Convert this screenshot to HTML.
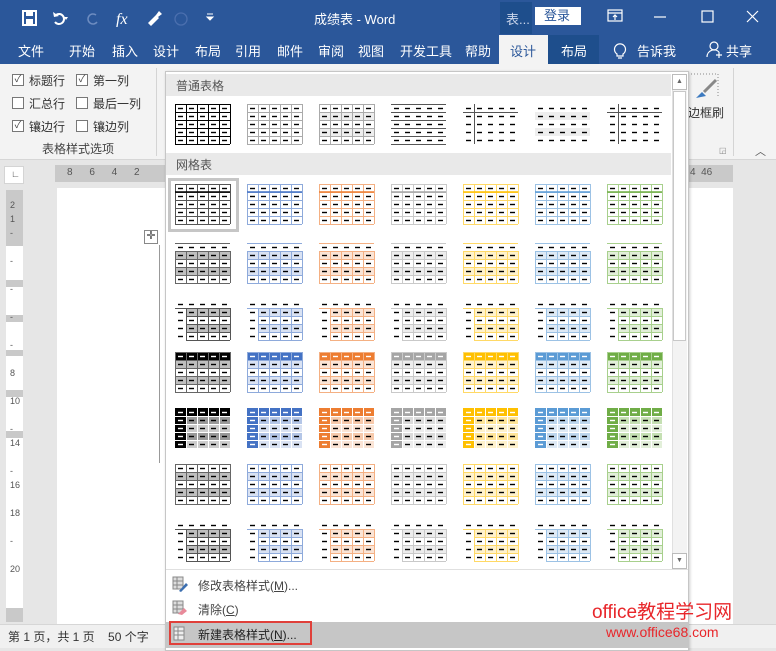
<!DOCTYPE html>
<html><head><meta charset="utf-8"><style>
*{margin:0;padding:0;box-sizing:border-box}
body{width:776px;height:648px;overflow:hidden;position:relative;background:#e6e6e6;font-family:"Liberation Sans","Noto Sans CJK SC",sans-serif;font-size:12px;color:#333}
.a{position:absolute;white-space:nowrap}
.w{color:#fff}
</style></head><body>
<!-- title bar -->
<div class="a" style="left:0;top:0;width:776px;height:64px;background:#2b579a"></div>
<svg class="a" style="left:20px;top:9px" width="200" height="18"><rect x="3" y="2" width="13" height="14" fill="none" stroke="#fff" stroke-width="2"/><rect x="6" y="2" width="7" height="5" fill="#fff"/><rect x="6" y="10" width="7" height="6" fill="#fff"/>
<path d="M36 6 a5 5 0 1 1 -1 7" fill="none" stroke="#fff" stroke-width="2"/><path d="M33 3 l1 5 5-1z" fill="#fff"/><path d="M44 8 l4 0 -2 3z" fill="#fff"/>
<path d="M76 6 a5 5 0 1 0 1 7" fill="none" stroke="#6d8cc0" stroke-width="1.5"/>
<text x="96" y="15" fill="#fff" font-family="Liberation Serif" font-style="italic" font-size="16">fx</text>
<path d="M128 14 l8-8 3 3 -8 8z M136 6 l3-4 3 3 -4 3z" fill="#fff"/>
<circle cx="161" cy="10" r="6" fill="none" stroke="#4b6fae" stroke-width="1.3"/>
<path d="M187 8h6l-3 3z M187 5h6" stroke="#fff" fill="#fff"/></svg>
<div class="a w" style="left:314px;top:9px;font-size:13px">成绩表 - Word</div>
<div class="a" style="left:500px;top:2px;width:32px;height:32px;background:#1e4e8c;color:#c9d5ea;padding:7px 0 0 6px;font-size:13px">表...</div>
<div class="a" style="left:535px;top:7px;width:46px;height:18px;background:#fff;color:#2b579a;font-size:13px;padding:0 0 0 9px;line-height:18px">登录</div>
<svg class="a" style="left:606px;top:8px" width="160" height="20"><rect x="2" y="2" width="14" height="11" fill="none" stroke="#fff" stroke-width="1.2"/><path d="M2 5h14M9 12V7M7 9l2-2 2 2" stroke="#fff" fill="none" stroke-width="1.2"/><path d="M48 9h12" stroke="#fff" stroke-width="1.2"/><rect x="96" y="3" width="11" height="11" fill="none" stroke="#fff" stroke-width="1.2"/><path d="M141 3l11 11M152 3l-11 11" stroke="#fff" stroke-width="1.2"/></svg>
<div class="a w" style="left:18px;top:41px;font-size:13px">文件</div>
<div class="a w" style="left:69px;top:41px;font-size:13px">开始</div>
<div class="a w" style="left:112px;top:41px;font-size:13px">插入</div>
<div class="a w" style="left:153px;top:41px;font-size:13px">设计</div>
<div class="a w" style="left:195px;top:41px;font-size:13px">布局</div>
<div class="a w" style="left:235px;top:41px;font-size:13px">引用</div>
<div class="a w" style="left:277px;top:41px;font-size:13px">邮件</div>
<div class="a w" style="left:318px;top:41px;font-size:13px">审阅</div>
<div class="a w" style="left:358px;top:41px;font-size:13px">视图</div>
<div class="a w" style="left:400px;top:41px;font-size:13px">开发工具</div>
<div class="a w" style="left:465px;top:41px;font-size:13px">帮助</div>
<div class="a" style="left:499px;top:35px;width:49px;height:30px;background:#f3f3f3;color:#2b579a;font-size:13px;padding:6px 0 0 11px">设计</div>
<div class="a" style="left:548px;top:35px;width:51px;height:29px;background:#1e4e8c;color:#fff;font-size:13px;padding:6px 0 0 13px">布局</div>
<svg class="a" style="left:610px;top:40px" width="20" height="20"><path d="M7 14 a5.5 5.5 0 1 1 6 0 v2h-6z M8 18h4" fill="none" stroke="#fff" stroke-width="1.2"/></svg>
<div class="a w" style="left:637px;top:41px;font-size:13px">告诉我</div>
<svg class="a" style="left:706px;top:40px" width="20" height="20"><circle cx="8" cy="6" r="4" fill="none" stroke="#fff" stroke-width="1.2"/><path d="M1 17 a7 7 0 0 1 12-5 M13 12v6M10 15h6" fill="none" stroke="#fff" stroke-width="1.2"/></svg>
<div class="a w" style="left:726px;top:41px;font-size:13px">共享</div>
<!-- ribbon -->
<div class="a" style="left:0;top:64px;width:776px;height:96px;background:#f3f3f3;border-bottom:1px solid #d6d6d6"></div>
<div class="a" style="left:156px;top:68px;width:1px;height:88px;background:#d4d4d4"></div>
<div id="cb"></div>
<div class="a" style="left:42px;top:140px;font-size:12px;color:#444">表格样式选项</div>
<div class="a" style="left:688px;top:104px;font-size:12px;color:#333">边框刷</div>
<svg class="a" style="left:688px;top:72px" width="40" height="30"><path d="M0 2h30v24" fill="none" stroke="#888" stroke-dasharray="1 2"/><path d="M8 26 l6-6 4 4z" fill="#3c7ac0"/><path d="M16 20 l12-12" stroke="#888" stroke-width="3"/></svg>
<div class="a" style="left:733px;top:68px;width:1px;height:88px;background:#d4d4d4"></div>
<div class="a" style="left:719px;top:146px;font-size:8px;color:#888">◲</div>
<div class="a" style="left:755px;top:143px;font-size:11px;color:#555">︿</div>
<!-- ruler & doc -->
<div class="a" style="left:4px;top:166px;width:20px;height:18px;background:#fff;border:1px solid #d4d4d4;font-size:9px;padding:2px 0 0 6px;color:#444">∟</div>
<div class="a" style="left:55px;top:165px;width:110px;height:17px;background:#c9c9c9;font-size:10px;color:#555;word-spacing:14px;padding:2px 0 0 12px">8 6 4 2</div>
<div class="a" style="left:688px;top:165px;width:45px;height:17px;background:#c9c9c9;font-size:10px;color:#555;padding:2px 0 0 2px">4&nbsp;&nbsp;46</div>
<div class="a" style="left:57px;top:188px;width:676px;height:436px;background:#fff"></div>
<div class="a" style="left:6px;top:190px;width:17px;height:432px;background:#c9c9c9"></div>
<div class="a" style="left:6px;top:246px;width:17px;height:34px;background:#fff"></div>
<div class="a" style="left:6px;top:287px;width:17px;height:28px;background:#fff"></div>
<div class="a" style="left:6px;top:322px;width:17px;height:28px;background:#fff"></div>
<div class="a" style="left:6px;top:356px;width:17px;height:34px;background:#fff"></div>
<div class="a" style="left:6px;top:397px;width:17px;height:34px;background:#fff"></div>
<div class="a" style="left:6px;top:438px;width:17px;height:170px;background:#fff"></div>
<div class="a" style="left:10px;top:198px;font-size:9px;color:#555;line-height:14px;width:8px;white-space:normal">2<br>1<br>-<br><br>-<br><br>-<br><br>-<br><br>-<br><br>8<br><br>10<br><br>-<br>14<br><br>-<br>16<br><br>18<br><br>-<br><br>20</div>
<div class="a" style="left:144px;top:230px;width:14px;height:14px;border:1px solid #888;background:#fff;font-size:11px;line-height:11px;text-align:center">✛</div>
<div class="a" style="left:159px;top:245px;width:8px;height:218px;border-left:1px solid #999"></div>
<div class="a" style="left:0;top:624px;width:776px;height:24px;background:#f0f0f0;border-top:1px solid #d6d6d6"></div>
<div class="a" style="left:8px;top:628px;font-size:12px;color:#333">第 1 页，共 1 页&nbsp;&nbsp;&nbsp;&nbsp;50 个字</div>
<!-- dropdown -->
<div class="a" style="left:165px;top:71px;width:524px;height:580px;background:#fff;border:1px solid #c6c6c6;box-shadow:1px 1px 3px rgba(0,0,0,.2)"></div>
<div class="a" style="left:166px;top:74px;width:505px;height:22px;background:#e9e9e9;font-size:12px;color:#555;padding:3px 0 0 10px">普通表格</div>
<div class="a" style="left:166px;top:153px;width:505px;height:22px;background:#e9e9e9;font-size:12px;color:#555;padding:3px 0 0 10px">网格表</div>
<div class="a" style="left:672px;top:74px;width:15px;height:495px;background:#f3f3f3;border-left:1px solid #e0e0e0"></div>
<div class="a" style="left:672px;top:74px;width:15px;height:16px;border:1px solid #bbb;background:#fff;font-size:7px;text-align:center;line-height:14px;color:#666">▲</div>
<div class="a" style="left:673px;top:91px;width:13px;height:250px;background:#fff;border:1px solid #c8c8c8"></div>
<div class="a" style="left:672px;top:553px;width:15px;height:16px;border:1px solid #bbb;background:#fff;font-size:7px;text-align:center;line-height:14px;color:#666">▼</div>
<div class="a" style="left:168px;top:178px;width:71px;height:54px;border:3px solid #c6c6c6"></div>
<div id="th"></div>
<div class="a" style="left:166px;top:569px;width:522px;height:1px;background:#e0e0e0"></div>
<svg class="a" style="left:172px;top:576px" width="16" height="16"><rect x="1" y="1" width="10" height="12" fill="#ddd" stroke="#888"/><path d="M1 5h10M1 9h10M5 1v12" stroke="#888"/><path d="M7 15l7-8 2 2-7 7z" fill="#3c6fb0"/></svg>
<div class="a" style="left:198px;top:577px;font-size:12px;color:#444">修改表格样式(<u>M</u>)...</div>
<svg class="a" style="left:172px;top:600px" width="16" height="16"><rect x="1" y="1" width="10" height="12" fill="#ddd" stroke="#888"/><path d="M1 5h10M1 9h10M5 1v12" stroke="#888"/><path d="M6 14l6-6 3 3-5 4z" fill="#e88a9a"/></svg>
<div class="a" style="left:198px;top:601px;font-size:12px;color:#444">清除(<u>C</u>)</div>
<div class="a" style="left:166px;top:622px;width:522px;height:26px;background:#c6c6c6"></div>
<div class="a" style="left:169px;top:621px;width:143px;height:24px;border:2px solid #e0403a"></div>
<svg class="a" style="left:173px;top:626px" width="14" height="16"><rect x="1" y="1" width="10" height="13" fill="#eee" stroke="#888"/><path d="M1 5h10M1 9h10M5 1v13" stroke="#888"/></svg>
<div class="a" style="left:198px;top:626px;font-size:12px;color:#222">新建表格样式(<u>N</u>)...</div>
<div class="a" style="left:592px;top:597px;font-size:19px;color:#e8262a">office教程学习网</div>
<div class="a" style="left:606px;top:624px;font-size:14px;color:#e8262a">www.office68.com</div>
<script>
var cb=[[12,72,1,'标题行'],[76,72,1,'第一列'],[12,95,0,'汇总行'],[76,95,0,'最后一列'],[12,118,1,'镶边行'],[76,118,0,'镶边列']],h='';
cb.forEach(function(c){h+='<div class="a" style="left:'+c[0]+'px;top:'+(c[1]+2)+'px;width:12px;height:12px;border:1px solid #777;background:#fff;font-size:10px;line-height:10px;text-align:center;color:#444">'+(c[2]?'✓':'')+'</div><div class="a" style="left:'+(c[0]+17)+'px;top:'+c[1]+'px;font-size:12px;color:#333">'+c[3]+'</div>';});
document.getElementById('cb').innerHTML=h;
var C=[['#000','#666','#bfbfbf','#999'],['#4472c4','#8eaadb','#d9e2f3','#b4c6e7'],['#ed7d31','#f4b083','#fbe4d5','#f7caac'],['#a5a5a5','#c9c9c9','#ededed','#dbdbdb'],['#ffc000','#ffd966','#fff2cc','#ffe599'],['#5b9bd5','#9cc2e5','#deeaf6','#bdd6ee'],['#70ad47','#a8d08d','#e2efd9','#c5e0b3']];
var W=11,H=8;
function svg(t,k){var c=C[k],s='',fill,line,dash,i,j,x,y;
 for(i=0;i<5;i++)for(j=0;j<5;j++){x=j*W;y=i*H;fill='#fff';dash='#000';
  if(t=='P6'&&i%2==1)fill='#eee';
  if(t=='P3'&&i%2==1)fill='#eee';
  if((t=='G2'||t=='G6'||t=='G4')&&i%2==1)fill=c[2];
  if((t=='G3'||t=='G7')&&i%2==1&&j>0)fill=c[2];
  if(t=='G4'&&i==0){fill=c[0];dash='#fff'}
  if(t=='G5'){fill=i%2?c[3]:c[2];if(k==0)fill=i%2?'#999':'#ccc';if(i==0||j==0){fill=c[0];dash='#fff'}}
  s+='<rect x="'+x+'" y="'+y+'" width="'+W+'" height="'+H+'" fill="'+fill+'"/><path d="M'+(x+3)+' '+(y+4.5)+'h5" stroke="'+dash+'" stroke-width="1.4"/>';}
 function L(x1,y1,x2,y2,col,w){s+='<path d="M'+x1+' '+y1+'L'+x2+' '+y2+'" stroke="'+col+'" stroke-width="'+(w||1)+'"/>';}
 var m=c[1];
 if(t=='P1'||t=='P2'||t=='P3'||t=='G1'||t=='G4'||t=='G6'||t=='G2'){var col=t=='P1'?'#000':t=='P2'||t=='P3'?'#aaa':(t=='G1'&&k==0?'#555':m);
  for(i=0;i<=5;i++)L(0,i*H+.5,55,i*H+.5,col);
  for(j=0;j<=5;j++)L(j*W+.5,(t=='G2'?H:0),j*W+.5,40,col);
  if(t=='G1')L(0,H,55,H,k==0?'#000':c[0],1.5);}
 if(t=='P4'){for(i=0;i<=5;i++)L(0,i*H+.5,55,i*H+.5,'#555');}
 if(t=='P5'||t=='P7'){L(0,H+.5,55,H+.5,'#555');L(W+.5,0,W+.5,40,'#555');}
 if(t=='G3'||t=='G7'){var col=k==0?'#555':m;for(i=1;i<=5;i++)L(W,i*H+.5,55,i*H+.5,col);for(j=1;j<=5;j++)L(j*W+.5,H,j*W+.5,40,col);L(0,H+.5,W,H+.5,col);}
 if(t=='G5'){for(i=1;i<5;i++)L(0,i*H+.5,55,i*H+.5,'#fff');for(j=1;j<5;j++)L(j*W+.5,0,j*W+.5,40,'#fff');}
 return '<svg width="56" height="41">'+s+'</svg>';}
var out='',P=['P1','P2','P3','P4','P5','P6','P7'];
for(var j=0;j<7;j++)out+='<div class="a" style="left:'+(175+72*j)+'px;top:104px">'+svg(P[j],0)+'</div>';
var G=['G1','G2','G3','G4','G5','G6','G7'],T=[184,243,300,352,408,464,521];
for(var r=0;r<7;r++)for(var k=0;k<7;k++)out+='<div class="a" style="left:'+(175+72*k)+'px;top:'+T[r]+'px">'+svg(G[r],k)+'</div>';
document.getElementById('th').innerHTML=out;
</script>
</body></html>
